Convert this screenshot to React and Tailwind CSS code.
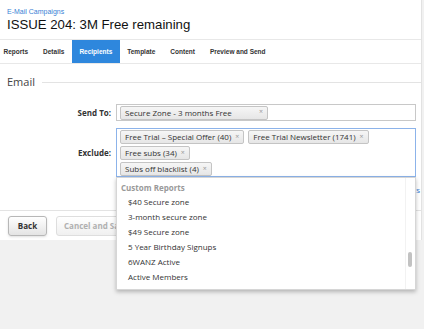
import React from "react";

const tabs = ["Reports", "Details", "Recipients", "Template", "Content", "Preview and Send"];

const excluded = [
  ["Free Trial – Special Offer (40)", "Free Trial Newsletter (1741)"],
  ["Free subs (34)"],
  ["Subs off blacklist (4)"],
];

const options = [
  "$40 Secure zone",
  "3-month secure zone",
  "$49 Secure zone",
  "5 Year Birthday Signups",
  "6WANZ Active",
  "Active Members",
];

function Tag({ label, className = "" }) {
  return (
    <span
      className={`flex items-center h-[14px] px-[4px] rounded-[2px] border border-[#c4c4c4] bg-gradient-to-b from-[#f6f6f6] to-[#e6e6e6] text-[#333] whitespace-nowrap ${className}`}
    >
      <span>{label}</span>
      <span className="ml-[4px] text-[#999] text-[7px]">×</span>
    </span>
  );
}

function App() {
  return (
    <div className="relative w-[424px] h-[329px] overflow-hidden bg-[#f1f1f1] font-['Open_Sans',sans-serif] text-[8px] text-[#333]">
      <div className="w-[422px] bg-white border-r border-[#e2e2e2]">
        <div className="h-[39px] px-[7px] pt-[7px] font-['Liberation_Sans',Arial,sans-serif]">
          <div className="text-[7px] leading-[9px] text-[#3a7fd5]">E-Mail Campaigns</div>
          <h1 className="text-[13.2px] leading-[16px] mt-[1px] text-[#111]">ISSUE 204: 3M Free remaining</h1>
        </div>

        <div className="flex h-[25px] border-y border-[#e8e8e8] ml-[-4px] font-['Liberation_Sans',Arial,sans-serif] font-bold text-[6.5px]">
          {tabs.map((t) => (
            <div
              key={t}
              className={
                t === "Recipients"
                  ? "flex items-center px-[7.5px] bg-[#2e87dd] text-white"
                  : "flex items-center px-[7.5px] text-[#333]"
              }
            >
              {t}
            </div>
          ))}
        </div>

        <div className="flex items-center h-[14px] mt-[11px] pl-[7px]">
          <span className="text-[11px] text-[#444]">Email</span>
          <div className="flex-1 ml-[7px] border-t border-[#e3e3e3]" />
        </div>

        <div className="flex items-center mt-[15px]">
          <div className="w-[111px] text-right font-bold">Send To:</div>
          <div className="ml-[5px] w-[300px] h-[17px] border border-[#c8c8c8] flex items-center pl-[3px]">
            <Tag label="Secure Zone - 3 months Free" className="w-[148px] justify-between" />
          </div>
        </div>

        <div className="flex items-center mt-[7px]">
          <div className="w-[111px] text-right font-bold">Exclude:</div>
          <div className="ml-[5px] w-[300px] h-[49px] border border-[#8cb3ea] pt-[1px] pl-[3px] flex flex-col gap-[2px]">
            {excluded.map((row, i) => (
              <div key={i} className="flex gap-[4px]">
                {row.map((l) => (
                  <Tag key={l} label={l} />
                ))}
              </div>
            ))}
          </div>
        </div>

        <div className="flex justify-end mt-[8px] h-[10px] items-center pr-[1px] text-[#3a7fd5]">
          Manage Custom Reports
        </div>

        <div className="mt-[15px] border-t border-[#e3e3e3] flex gap-[9px] px-[8px] pt-[5px] pb-[4px]">
          <button className="w-[39px] h-[20px] rounded-[3px] border border-[#b7b7b7] bg-gradient-to-b from-white to-[#e4e4e4] font-bold text-[#333] shadow-sm">
            Back
          </button>
          <button className="w-[90px] h-[20px] rounded-[3px] border border-[#dedede] bg-gradient-to-b from-white to-[#f0f0f0] font-bold text-[#b0b0b0] text-left pl-[7px]">
            Cancel and Save
          </button>
        </div>
      </div>

      <div className="absolute left-[116px] top-[177px] w-[300px] h-[113px] bg-white border border-[#d6d6d6] shadow-[0_2px_4px_rgba(0,0,0,0.25)] z-10">
        <div className="absolute right-0 top-0 bottom-0 w-[10px] border-l border-[#f2f2f2]">
          <div className="absolute left-[2px] top-[74px] w-[4px] h-[15px] rounded-full bg-[#c2c2c2]" />
        </div>
        <div className="pl-[4px] pt-[4px] h-[16px] flex items-center font-bold text-[#9a9a9a]">Custom Reports</div>
        {options.map((o) => (
          <div key={o} className="h-[15px] flex items-center pl-[11px] text-[#333]">
            {o}
          </div>
        ))}
      </div>
    </div>
  );
}

export default App;
